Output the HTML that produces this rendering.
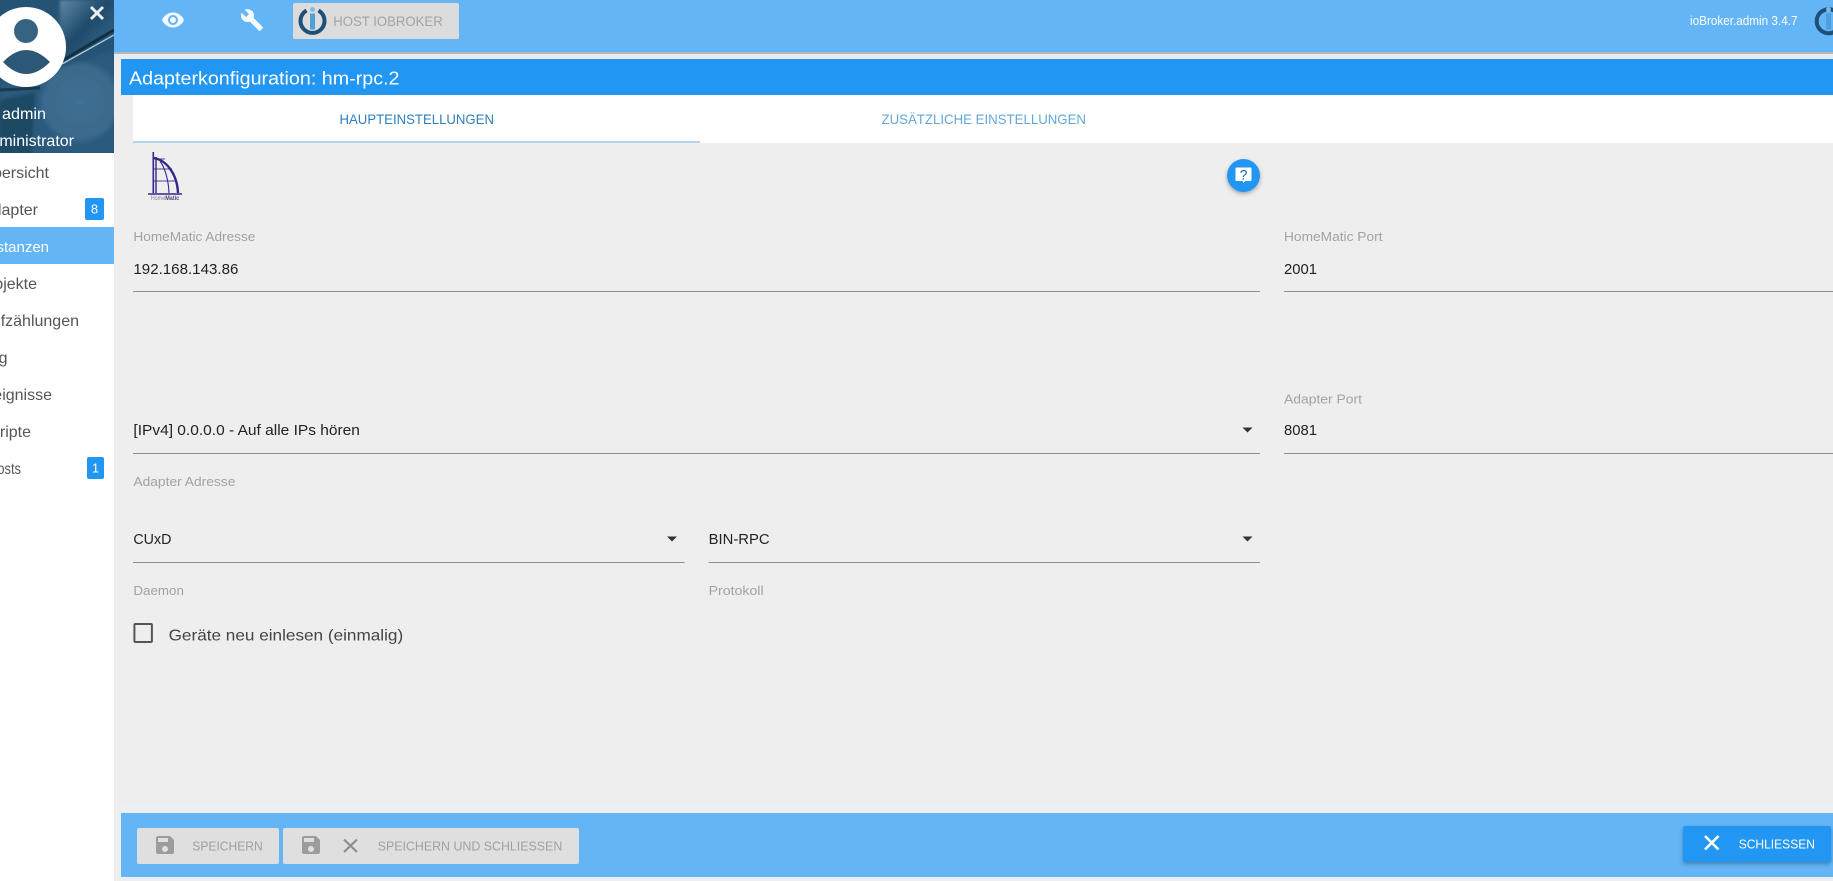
<!DOCTYPE html>
<html lang="de"><head><meta charset="utf-8"><title>ioBroker.admin</title>
<style>
html,body{margin:0;padding:0;width:1833px;height:881px;overflow:hidden;background:#eee}
svg{display:block}
text{font-family:"Liberation Sans",Arial,sans-serif}
.m{font-size:16px;fill:#555}
.l{font-size:13px;fill:#a2a2a2}
.v{font-size:15px;fill:#222}
.b{font-size:13px;fill:#a0a0a0}
</style></head><body>
<svg width="1833" height="881" viewBox="0 0 1833 881" xmlns="http://www.w3.org/2000/svg">
<defs>
<linearGradient id="tr" x1="0" y1="0" x2="1" y2="1"><stop offset="0" stop-color="#5f8aa6"/><stop offset=".45" stop-color="#1f4a6a"/><stop offset="1" stop-color="#3d6f92"/></linearGradient>
<radialGradient id="orb"><stop offset="0" stop-color="#3f6f92"/><stop offset=".85" stop-color="#3a6a8c"/><stop offset="1" stop-color="#3a6a8c" stop-opacity="0"/></radialGradient>
<filter id="bl" x="-10%" y="-10%" width="120%" height="120%"><feGaussianBlur stdDeviation="1.500"/></filter>
<filter id="s1" x="-30%" y="-30%" width="160%" height="170%"><feDropShadow dx="0" dy="2" stdDeviation="2" flood-color="#000" flood-opacity=".3"/></filter>
<clipPath id="hdc"><rect width="114" height="153"/></clipPath>
<path id="save" d="M17 3H5c-1.110 0-2 .9-2 2v14c0 1.100.89 2 2 2h14c1.100 0 2-.9 2-2V7l-4-4zm-5 16c-1.660 0-3-1.340-3-3s1.340-3 3-3 3 1.340 3 3-1.340 3-3 3zm3-10H5V5h10v4z"/>
</defs>
<rect width="1833" height="881" fill="#eeeeee"/>
<!-- top bar -->
<rect x="114" y="52" width="1719" height="7" fill="#e9edf0"/>
<rect x="114" y="52" width="1719" height="2" fill="#b4b8bb"/>
<rect x="114" y="0" width="1719" height="52" fill="#64b5f6"/>
<path transform="translate(161,8)" fill="#fff" fill-opacity=".92" d="M12 4.500C7 4.500 2.730 7.610 1 12c1.730 4.390 6 7.500 11 7.500s9.270-3.110 11-7.500c-1.730-4.390-6-7.500-11-7.500zM12 17c-2.760 0-5-2.240-5-5s2.240-5 5-5 5 2.240 5 5-2.240 5-5 5zm0-8c-1.660 0-3 1.340-3 3s1.340 3 3 3 3-1.340 3-3-1.340-3-3-3z"/>
<path transform="translate(240,8)" fill="#fff" fill-opacity=".92" d="M22.700 19l-9.100-9.100c.9-2.300.4-5-1.500-6.900-2-2-5-2.400-7.400-1.300L9 6 6 9 1.600 4.700C.4 7.100.9 10.100 2.900 12.100c1.900 1.900 4.600 2.400 6.900 1.500l9.100 9.100c.4.4 1 .4 1.400 0l2.300-2.300c.5-.4.5-1.100.1-1.400z"/>
<rect x="293" y="3" width="166" height="36" rx="2" fill="#dcdcdc"/>
<path d="M318.500 10.500A12 12 0 1 1 306.500 10.500" fill="none" stroke="#1d4f78" stroke-width="4"/>
<rect x="310" y="13.500" width="5" height="16" fill="#4f9fd8"/>
<circle cx="312.500" cy="9.500" r="2.400" fill="#7dbce8"/>
<text x="333.300" y="26" font-size="14" fill="#a3a3a3" textLength="109.400" lengthAdjust="spacingAndGlyphs">HOST IOBROKER</text>
<text x="1690" y="25" font-size="13" fill="#fff" textLength="107.500" lengthAdjust="spacingAndGlyphs">ioBroker.admin 3.4.7</text>
<path d="M1834 10.500A12 12 0 1 0 1834 32" fill="none" stroke="#1d4f78" stroke-width="4"/>
<rect x="1826" y="13.500" width="5" height="16" fill="#4f9fd8"/>
<circle cx="1828.500" cy="9.500" r="2.400" fill="#7dbce8"/>
<!-- title -->
<rect x="121" y="59" width="1712" height="36" fill="#2196f3"/>
<text x="129" y="84.500" font-size="18.500" fill="#fff" textLength="270.500" lengthAdjust="spacingAndGlyphs">Adapterkonfiguration: hm-rpc.2</text>
<!-- tabs -->
<rect x="133" y="95" width="1700" height="48" fill="#fff"/>
<rect x="133" y="141" width="567" height="2" fill="#b2d5ee"/>
<text x="339.500" y="124" font-size="14" fill="#2f7fbe" textLength="154.500" lengthAdjust="spacingAndGlyphs">HAUPTEINSTELLUNGEN</text>
<text x="881.500" y="124" font-size="14" fill="#64a7d8" textLength="204.500" lengthAdjust="spacingAndGlyphs">ZUSÄTZLICHE EINSTELLUNGEN</text>
<!-- HomeMatic logo -->
<g fill="none" stroke="#32288a">
<path d="M153.300 152V193" stroke-width="1.600"/>
<path d="M156 157V193" stroke-width="1.400"/>
<path d="M154 158C165 160 177 172 178 193" stroke-width="2.400"/>
<path d="M160 161C165 168 168.500 180 169 193" stroke-width="1.100"/>
<path d="M153 159H165M153 169H172M153 181H176" stroke-width=".9" stroke-opacity=".85"/>
<path d="M148 194H182" stroke-width="1.600"/>
</g>
<text x="150.700" y="200" font-size="6" font-weight="bold" fill="#4a4a78" textLength="28.500" lengthAdjust="spacingAndGlyphs"><tspan fill="#8a86a8" font-weight="normal">Home</tspan>Matic</text>
<!-- help fab -->
<circle cx="1243.500" cy="175.500" r="16.500" fill="#2196f3" filter="url(#s1)"/>
<path d="M1236.500 167.500H1250.500A1 1 0 0 1 1251.500 168.500V180A1 1 0 0 1 1250.500 181H1245L1243.800 183L1242.500 181H1236.500A1 1 0 0 1 1235.500 180V168.500A1 1 0 0 1 1236.500 167.500Z" fill="#fff"/>
<text x="1243.500" y="179.500" font-size="14" fill="#1c5fa8" text-anchor="middle">?</text>
<!-- form -->
<text class="l" x="133.400" y="241" textLength="122" lengthAdjust="spacingAndGlyphs">HomeMatic Adresse</text>
<text class="v" x="133.400" y="274" textLength="105" lengthAdjust="spacingAndGlyphs">192.168.143.86</text>
<rect x="133" y="291" width="1127" height="1" fill="#8f8f8f"/>
<text class="l" x="1284" y="241" textLength="98.500" lengthAdjust="spacingAndGlyphs">HomeMatic Port</text>
<text class="v" x="1284" y="274" textLength="33" lengthAdjust="spacingAndGlyphs">2001</text>
<rect x="1284" y="291" width="549" height="1" fill="#8f8f8f"/>
<text class="v" x="133.400" y="435" textLength="226.500" lengthAdjust="spacingAndGlyphs">[IPv4] 0.0.0.0 - Auf alle IPs hören</text>
<path d="M1242.500 427.500H1252.500L1247.500 432.500Z" fill="#333"/>
<rect x="133" y="453" width="1127" height="1" fill="#8f8f8f"/>
<text class="l" x="133.400" y="486" textLength="102" lengthAdjust="spacingAndGlyphs">Adapter Adresse</text>
<text class="l" x="1284" y="403.500" textLength="78" lengthAdjust="spacingAndGlyphs">Adapter Port</text>
<text class="v" x="1284" y="435" textLength="33" lengthAdjust="spacingAndGlyphs">8081</text>
<rect x="1284" y="453" width="549" height="1" fill="#8f8f8f"/>
<text class="v" x="133.400" y="544" textLength="38" lengthAdjust="spacingAndGlyphs">CUxD</text>
<path d="M667 536.500H677L672 541.500Z" fill="#333"/>
<rect x="133" y="562" width="551.500" height="1" fill="#8f8f8f"/>
<text class="v" x="708.600" y="544" textLength="61" lengthAdjust="spacingAndGlyphs">BIN-RPC</text>
<path d="M1242.500 536.500H1252.500L1247.500 541.500Z" fill="#333"/>
<rect x="708.600" y="562" width="551.400" height="1" fill="#8f8f8f"/>
<text class="l" x="133.400" y="595" textLength="50.500" lengthAdjust="spacingAndGlyphs">Daemon</text>
<text class="l" x="708.600" y="595" textLength="55" lengthAdjust="spacingAndGlyphs">Protokoll</text>
<rect x="134.400" y="624" width="17.500" height="18" rx="1" fill="none" stroke="#555" stroke-width="2"/>
<text x="168.600" y="640.500" font-size="16" fill="#444" textLength="234.600" lengthAdjust="spacingAndGlyphs">Geräte neu einlesen (einmalig)</text>
<!-- bottom bar -->
<rect x="115" y="805" width="1718" height="8" fill="#edf0f3"/>
<rect x="121" y="813" width="1712" height="64" fill="#64b5f6"/>
<rect x="137" y="828" width="142" height="36" rx="2" fill="#dfdfdf"/>
<use href="#save" transform="translate(153,833)" fill="#9c9c9c"/>
<text class="b" x="192.300" y="850.300" textLength="70.400" lengthAdjust="spacingAndGlyphs">SPEICHERN</text>
<rect x="283" y="828" width="296" height="36" rx="2" fill="#dfdfdf"/>
<use href="#save" transform="translate(299,833)" fill="#9c9c9c"/>
<path d="M344 839.500L357 852M357 839.500L344 852" stroke="#8e8e8e" stroke-width="2.200" fill="none"/>
<text class="b" x="377.700" y="850.300" textLength="184.600" lengthAdjust="spacingAndGlyphs">SPEICHERN UND SCHLIESSEN</text>
<rect x="1683" y="826" width="148" height="36" rx="2" fill="#2196f3" filter="url(#s1)"/>
<path d="M1705 836L1718.500 849.500M1718.500 836L1705 849.500" stroke="#fff" stroke-width="2.600" fill="none"/>
<text x="1738.700" y="848.300" font-size="13" fill="#fff" textLength="76.300" lengthAdjust="spacingAndGlyphs">SCHLIESSEN</text>
<!-- sidebar -->
<rect x="0" y="0" width="114" height="881" fill="#fff"/>
<g clip-path="url(#hdc)">
<rect x="0" y="0" width="114" height="153" fill="#255375"/>
<g filter="url(#bl)">
<path d="M60 0H114V30L60 60Z" fill="url(#tr)"/>
<path d="M0 82L60 70L114 50V153H0Z" fill="#2a5a7e"/>
<path d="M0 100L35 92L32 153H0Z" fill="#1e4864"/>
</g>
<circle cx="80" cy="102" r="42" fill="url(#orb)" filter="url(#bl)"/>
<path d="M60 62L114 30" stroke="#12303f" stroke-width="3" fill="none"/>
<path d="M62 64L114 35" stroke="#a8c6d8" stroke-width="1.400" fill="none"/>
<path d="M0 90L40 88" stroke="#1a3a50" stroke-width="3" fill="none"/>
</g>
<circle cx="26" cy="47" r="40" fill="#fff"/>
<circle cx="26" cy="31" r="12" fill="#356483"/>
<path d="M3 62Q26 38 50 62Q26 86 3 62Z" fill="#2c5876"/>
<path d="M91 7L103 19M103 7L91 19" stroke="#fff" stroke-opacity=".9" stroke-width="3" fill="none"/>
<text x="2" y="119" font-size="16" fill="#fff" textLength="44" lengthAdjust="spacingAndGlyphs">admin</text>
<text x="74" y="146" font-size="16" fill="#fff" text-anchor="end">Administrator</text>
<rect x="0" y="227" width="114" height="37" fill="#64b5f6"/>
<text class="m" x="49" y="178" text-anchor="end">Übersicht</text>
<text class="m" x="38" y="215" text-anchor="end">Adapter</text>
<text x="49" y="252" text-anchor="end" font-size="15" fill="#fff">Instanzen</text>
<text class="m" x="37" y="289" text-anchor="end">Objekte</text>
<text class="m" x="79" y="326" text-anchor="end">Aufzählungen</text>
<text class="m" x="7.500" y="363" text-anchor="end">Log</text>
<text class="m" x="52" y="400" text-anchor="end">Ereignisse</text>
<text class="m" x="31" y="437" text-anchor="end">Skripte</text>
<text class="m" x="-12" y="474" textLength="33" lengthAdjust="spacingAndGlyphs">Hosts</text>
<rect x="85" y="198" width="19" height="22" rx="2" fill="#2196f3"/>
<text x="94.500" y="213.500" font-size="13" fill="#fff" text-anchor="middle">8</text>
<rect x="87" y="457" width="17" height="22" rx="2" fill="#2196f3"/>
<text x="95.500" y="472.500" font-size="13" fill="#fff" text-anchor="middle">1</text>
</svg>
</body></html>
